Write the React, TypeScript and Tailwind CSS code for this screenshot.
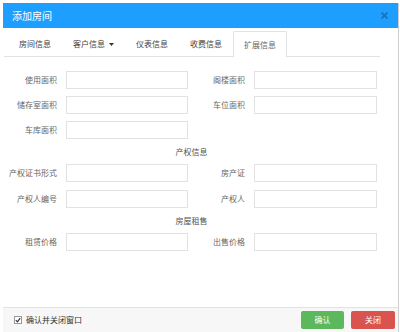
import React from 'react'

const font = { fontFamily: '"Noto Sans CJK SC", "Noto Sans", sans-serif' }

function Field({ label, labelW, inputW }: { label: string; labelW: string; inputW: string }) {
  return (
    <div className="flex items-center">
      <div className={`${labelW} text-right text-[8px] leading-none text-[#666]`}>{label}</div>
      <div className={`${inputW} ml-[9px] h-[18px] border border-[#e2e2e2] bg-white`} />
    </div>
  )
}

function Row({ left, right, className = '' }: { left: string; right?: string; className?: string }) {
  return (
    <div className={`flex ${className}`}>
      <div className="w-[187px]">
        <Field label={left} labelW="w-[54px]" inputW="w-[122px]" />
      </div>
      {right && <Field label={right} labelW="w-[55px]" inputW="w-[123px]" />}
    </div>
  )
}

function Section({ title }: { title: string }) {
  return (
    <div className="h-[25px] w-[377px] flex items-center justify-center text-[8px] leading-none text-[#555]">
      {title}
    </div>
  )
}

const tabs = ['房间信息', '客户信息', '仪表信息', '收费信息', '扩展信息']

export default function App() {
  return (
    <div className="w-[400px] h-[332px] bg-white pt-[3px] pl-[3px] overflow-hidden" style={font}>
      <div className="w-[396px] h-[329px] flex flex-col border-r border-[#cfcfcf] bg-white">
        <div className="h-[25px] bg-[#1e9fff] flex items-center justify-between pl-[9px] pr-[9px]">
          <span className="text-[10px] leading-none text-white">添加房间</span>
          <svg width="7" height="7" viewBox="0 0 7 7" className="mr-[1px]">
            <path d="M0.5 0.5L6.5 6.5M6.5 0.5L0.5 6.5" stroke="#1773b8" strokeWidth="1.6" />
          </svg>
        </div>

        <div className="flex-1">
          <div className="ml-[1px] mt-[3px] w-[376px] flex border-b border-[#e2e2e2] pl-[4px]">
            {tabs.map((t, i) => {
              const active = i === 4
              return (
                <div
                  key={t}
                  className={`h-[25px] px-[10px] flex items-center text-[8px] leading-none border border-b-0 rounded-t-[2px] -mb-px ${
                    active ? 'border-[#e2e2e2] bg-white text-[#666] h-[26px]' : 'border-transparent text-[#444]'
                  }`}
                >
                  {t}
                  {i === 1 && (
                    <svg width="5" height="3" viewBox="0 0 5 3" className="ml-[4px]">
                      <path d="M0 0H5L2.5 3Z" fill="#333" />
                    </svg>
                  )}
                </div>
              )
            })}
          </div>

          <div className="flex flex-col">
            <Row left="使用面积" right="阁楼面积" className="mt-[14px]" />
            <Row left="储存室面积" right="车位面积" className="mt-[7px]" />
            <Row left="车库面积" className="mt-[7px]" />
            <Section title="产权信息" />
            <Row left="产权证书形式" right="房产证" />
            <Row left="产权人编号" right="产权人" className="mt-[8px]" />
            <Section title="房屋租售" />
            <Row left="租赁价格" right="出售价格" />
          </div>
        </div>

        <div className="h-[25px] border-t border-[#e2e2e2] bg-[#f7f7f7] flex items-center pl-[11px] pr-[3px]">
          <div className="w-[8px] h-[8px] border border-[#999] bg-white flex items-center justify-center">
            <svg width="6" height="6" viewBox="0 0 6 6">
              <path d="M0.8 3.2L2.4 4.8L5.2 1.2" stroke="#333" strokeWidth="1.2" fill="none" />
            </svg>
          </div>
          <span className="ml-[4px] text-[8px] leading-none text-[#333]">确认并关闭窗口</span>
          <div className="ml-auto flex gap-[7px]">
            <button className="w-[43px] h-[18px] rounded-[2px] bg-[#5cb85c] text-white text-[8px] leading-none">确认</button>
            <button className="w-[44px] h-[18px] rounded-[2px] bg-[#d9534f] text-white text-[8px] leading-none">关闭</button>
          </div>
        </div>
      </div>
    </div>
  )
}
